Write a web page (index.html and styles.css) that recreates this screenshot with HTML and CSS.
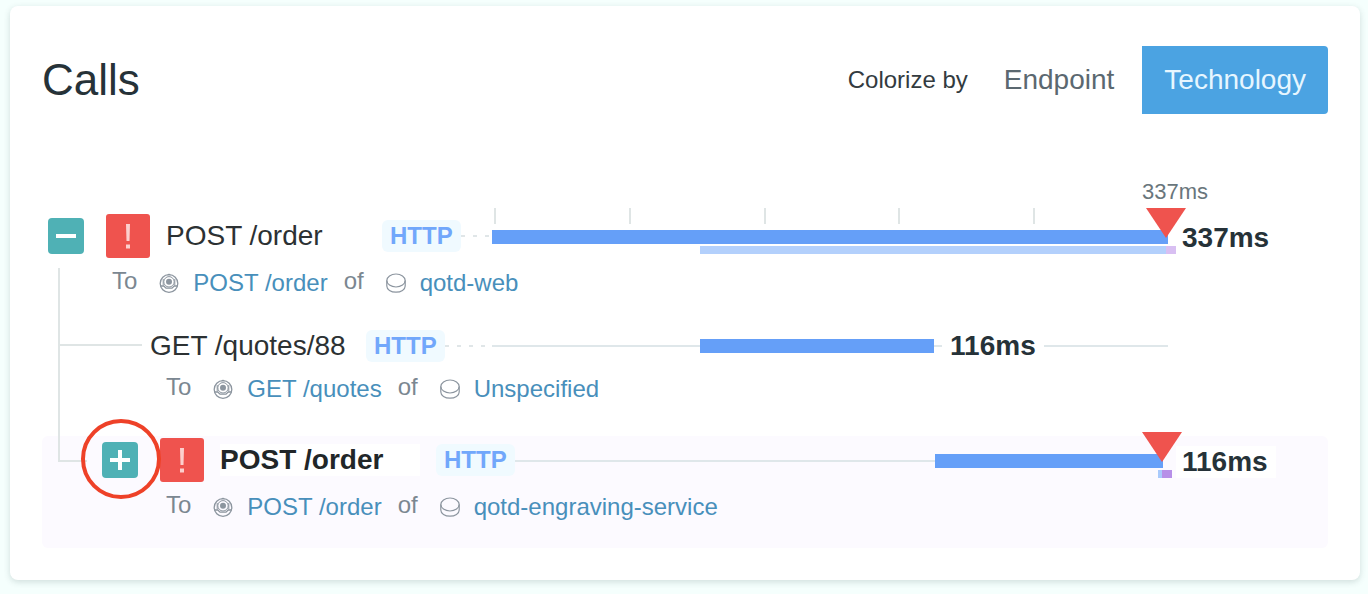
FILE: index.html
```html
<!DOCTYPE html>
<html lang="en">
<head>
<meta charset="utf-8">
<title>Calls</title>
<link rel="stylesheet" href="styles.css">
</head>
<body>
<svg class="defs" aria-hidden="true">
  <symbol id="endpoint" viewBox="0 0 20 20">
    <g fill="none" stroke="currentColor" stroke-width="1.3">
      <circle cx="10" cy="10.500" r="8.800"/>
      <circle cx="10" cy="8.800" r="5.200" stroke-width="1"/>
      <path d="M1.500 13h3.300l2.200 2.200h6L15.200 13h3.300"/>
      <path d="M4.200 6v6.500M15.800 6v6.500" stroke-width="1"/>
    </g>
    <path d="M8 2.200 10 .4l2 1.800z" fill="currentColor"/>
    <circle cx="10" cy="8.800" r="3" fill="currentColor"/>
  </symbol>
  <symbol id="service" viewBox="0 0 20 20">
    <g fill="none" stroke="currentColor" stroke-width="1.2">
      <ellipse cx="10" cy="7.500" rx="9.200" ry="6.500"/>
      <path d="M.8 7.500v5.500c0 3.600 4.100 6.200 9.200 6.200s9.200-2.600 9.200-6.200V7.500"/>
    </g>
  </symbol>
  <symbol id="marker" viewBox="0 0 40 30"><path d="M0 0h40L20 30z" fill="#ef534e"/></symbol>
  <symbol id="alert" viewBox="0 0 44 44">
    <rect width="44" height="44" rx="3" fill="#ef534e"/>
    <path d="M20 10h4l-.5 17h-3zM20 30.500h4v4h-4z" fill="#fccfcd"/>
  </symbol>
</svg>
<main class="card">
  <header class="card-header">
    <h1 class="title">Calls</h1>
    <div class="switch" role="group" aria-labelledby="colorize">
      <span class="switch-label" id="colorize">Colorize by</span>
      <button class="option" type="button">Endpoint</button>
      <button class="option option-active" type="button" aria-pressed="true">Technology</button>
    </div>
  </header>

  <div class="axis lane">
    <span class="axis-label">337ms</span>
    <div class="ticks"><i class="tick"></i><i class="tick"></i><i class="tick"></i><i class="tick"></i><i class="tick"></i></div>
  </div>

  <ul class="calls">
    <li class="call">
      <div class="lane">
        <div class="info">
          <button class="toggle" type="button" aria-label="Collapse"><svg class="sign" viewBox="0 0 20 20"><path d="M0 10h20"/></svg></button>
          <svg class="alert" role="img" aria-label="Error"><use href="#alert"/></svg>
          <span class="name">POST /order</span><span class="badge">HTTP</span><span class="dashes"></span>
        </div>
        <div class="track">
          <div class="bar" style="width:100%"></div>
          <div class="children faded" style="margin-left:30.800%"><i class="child-http" style="width:68.900%"></i><i class="child-other"></i></div>
          <svg class="marker" style="left:99.700%"><use href="#marker"/></svg>
        </div>
        <span class="duration">337ms</span>
      </div>
      <div class="target">
        <span class="word">To</span><svg class="icon"><use href="#endpoint"/></svg><a class="link" href="#">POST /order</a>
        <span class="word word-of">of</span><svg class="icon"><use href="#service"/></svg><a class="link" href="#">qotd-web</a>
      </div>
    </li>

    <li class="call call-child call-plain">
      <div class="lane">
        <div class="info">
          <span class="name">GET /quotes/88</span><span class="badge">HTTP</span><span class="dashes"></span>
        </div>
        <div class="track track-inline">
          <span class="line" style="width:30.800%"></span>
          <div class="bar" style="width:34.600%"></div>
          <span class="line line-short"></span>
          <span class="duration-inline">116ms</span>
          <span class="line line-fill"></span>
        </div>
      </div>
      <div class="target">
        <span class="word">To</span><svg class="icon"><use href="#endpoint"/></svg><a class="link" href="#">GET /quotes</a>
        <span class="word word-of">of</span><svg class="icon"><use href="#service"/></svg><a class="link" href="#">Unspecified</a>
      </div>
    </li>

    <li class="call call-child call-selected">
      <div class="lane">
        <div class="info">
          <span class="ringed"><button class="toggle" type="button" aria-label="Expand"><svg class="sign" viewBox="0 0 20 20"><path d="M0 10h20M10 0v20"/></svg></button></span>
          <svg class="alert" role="img" aria-label="Error"><use href="#alert"/></svg>
          <span class="name">POST /order</span><span class="badge">HTTP</span>
        </div>
        <div class="track">
          <div class="bar-row"><span class="line" style="width:65.500%"></span><div class="bar" style="width:33.700%"></div></div>
          <div class="children" style="margin-left:98.500%"><i class="child-http child-short"></i><i class="child-other"></i></div>
          <svg class="marker" style="left:99.100%"><use href="#marker"/></svg>
        </div>
        <span class="duration">116ms</span>
      </div>
      <div class="target">
        <span class="word">To</span><svg class="icon"><use href="#endpoint"/></svg><a class="link" href="#">POST /order</a>
        <span class="word word-of">of</span><svg class="icon"><use href="#service"/></svg><a class="link" href="#">qotd-engraving-service</a>
      </div>
    </li>
  </ul>
</main>
</body>
</html>
```
FILE: styles.css
```css
*, *::before, *::after { box-sizing: border-box; }

body {
  margin: 0;
  padding: 6px 8px 14px 10px;
  background: #f5fffd;
  color: #333b3f;
  font-family: "Liberation Sans", Arial, sans-serif;
  font-size: 24px;
  line-height: 32px;
}

.defs { position: absolute; width: 0; height: 0; }

button { border: 0; padding: 0; font: inherit; cursor: pointer; }

.card {
  padding: 40px 32px 32px;
  border-radius: 8px;
  background: #fff;
  box-shadow: 0 2px 6px rgba(60, 90, 90, 0.2);
}

.card-header { display: flex; justify-content: space-between; align-items: center; }
.title { margin: 0; font-size: 44px; line-height: 52px; font-weight: 400; color: #263238; }

.switch { display: flex; align-items: center; gap: 6px; }
.switch-label { margin-right: 8px; }
.option { height: 68px; padding: 0 22px; background: none; color: #5b6870; font-size: 28px; }
.option-active { border-radius: 0 4px 4px 0; background: #4ba3e2; color: #e6f6ff; }

.lane { display: grid; grid-template-columns: 450px minmax(0, 1fr) 160px; align-items: center; }

.axis { margin: 66px 0 -10px; row-gap: 4px; }
.axis-label {
  grid-column: 2 / 4;
  justify-self: end;
  margin-right: 120px;
  color: #69767c;
  font-size: 22px;
  line-height: 24px;
}
.ticks { grid-column: 2; display: flex; padding-left: 2px; }
.tick { flex: 1; height: 16px; border-left: 2px solid #dfe5e5; }

.calls { display: flex; flex-direction: column; gap: 20px; margin: 0; padding: 0; list-style: none; }
.call { position: relative; }
.info { display: flex; align-items: center; min-height: 36px; padding-left: 6px; }
.call-child .info { padding-left: 60px; }
.call-plain .info { padding-left: 108px; }

.toggle {
  display: flex;
  align-items: center;
  justify-content: center;
  width: 36px;
  height: 36px;
  border-radius: 4px;
  background: #4fb1b5;
}
.sign { width: 20px; height: 20px; stroke: #fff; stroke-width: 4; }
.toggle, .alert, .name, .badge { flex: none; }
.ringed { position: relative; }
.ringed::after {
  content: "";
  position: absolute;
  top: -23px;
  left: -21px;
  width: 80px;
  height: 80px;
  border: 4px solid #ee4128;
  border-radius: 50%;
  pointer-events: none;
  z-index: 1;
}

.alert { width: 44px; height: 44px; margin: 0 16px 0 22px; }
.name { width: 200px; margin-right: 16px; background: #fff; color: #2c3133; font-size: 28px; white-space: nowrap; }
.call-selected .name { font-weight: 700; color: #212628; }
.badge {
  position: relative;
  z-index: 1;
  padding: 0 8px;
  border-radius: 6px;
  background: #f0faff;
  color: #71a7fb;
  font-weight: 700;
}

.dashes {
  flex: 1;
  height: 2px;
  background: repeating-linear-gradient(90deg, #e0e6e8 0 4px, transparent 4px 12px);
}
.line { flex: none; height: 2px; background: #dfe7ea; }
.line-short { width: 8px; }
.line-fill { flex: 1; }

.track { position: relative; align-self: stretch; padding-top: 16px; }
.bar { flex: none; height: 14px; background: #659ff8; }
.bar-row, .track-inline { display: flex; align-items: center; }
.track-inline { padding-top: 0; }
.children { display: flex; height: 8px; margin-top: 2px; }
.child-http { flex: none; background: #a9cafc; }
.child-other { flex: none; width: 10px; background: #b78fe8; }
.child-short { width: 4px; }
.faded .child-http { background: #b3d0fc; }
.faded .child-other { background: #d8bff2; }
.children.faded { width: 100%; }
.marker { position: absolute; top: -6px; width: 40px; height: 30px; margin-left: -20px; }

.duration, .duration-inline { color: #263238; font-size: 28px; font-weight: 700; }
.duration { justify-self: start; margin: 4px 0 0 8px; padding: 0 8px 0 6px; background: #fff; }
.duration-inline { padding: 0 8px; }

.target { display: flex; align-items: center; height: 50px; padding-left: 70px; }
.call-child .target { padding-left: 124px; }
.word { padding-bottom: 4px; color: #7b8791; }
.word-of { margin-left: 16px; }
.icon { width: 20px; height: 20px; margin: 0 14px 0 22px; color: #8c959f; }
.link { color: #488fbb; text-decoration: none; }

.call-selected { margin-top: 2px; padding: 2px 0 16px; border-radius: 6px; background: #fcfaff; }

/* tree connectors */
.call-child::before {
  content: "";
  position: absolute;
  left: 16px;
  border: solid #dfe5e5;
  border-width: 0 0 2px 2px;
}
.call-plain::before { top: -60px; width: 84px; height: 78px; }
.call-selected::before { top: -90px; width: 29px; height: 116px; }
```
